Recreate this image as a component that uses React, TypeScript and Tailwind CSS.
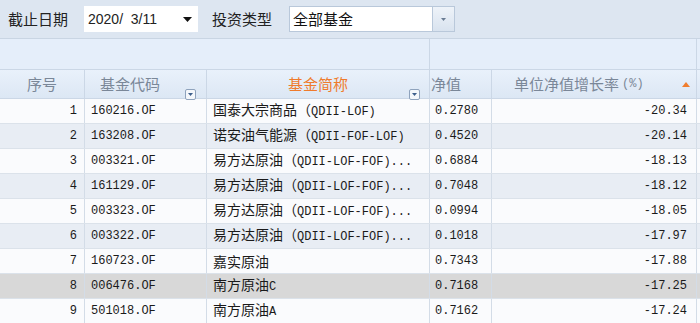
import React from 'react';

interface FundRow {
  no: number;
  code: string;
  name: string;
  nav: string;
  growth: string;
}

const rows: FundRow[] = [
  { no: 1, code: '160216.OF', name: '国泰大宗商品（QDII-LOF)', nav: '0.2780', growth: '-20.34' },
  { no: 2, code: '163208.OF', name: '诺安油气能源（QDII-FOF-LOF)', nav: '0.4520', growth: '-20.14' },
  { no: 3, code: '003321.OF', name: '易方达原油（QDII-LOF-FOF)...', nav: '0.6884', growth: '-18.13' },
  { no: 4, code: '161129.OF', name: '易方达原油（QDII-LOF-FOF)...', nav: '0.7048', growth: '-18.12' },
  { no: 5, code: '003323.OF', name: '易方达原油（QDII-LOF-FOF)...', nav: '0.0994', growth: '-18.05' },
  { no: 6, code: '003322.OF', name: '易方达原油（QDII-LOF-FOF)...', nav: '0.1018', growth: '-17.97' },
  { no: 7, code: '160723.OF', name: '嘉实原油', nav: '0.7343', growth: '-17.88' },
  { no: 8, code: '006476.OF', name: '南方原油C', nav: '0.7168', growth: '-17.25' },
  { no: 9, code: '501018.OF', name: '南方原油A', nav: '0.7162', growth: '-17.24' },
];

const cjk = { fontFamily: '"Noto Sans CJK SC", sans-serif' };
const mono = { fontFamily: '"Liberation Mono", "Noto Sans CJK SC", monospace' };

// split a label into CJK / ascii runs so each gets its own font
const MixedText = ({ text }: { text: string }) => {
  const parts = text.match(/[\u4e00-\u9fff\uff08]+|[^\u4e00-\u9fff\uff08]+/g) ?? [];
  return (
    <span className="relative -top-[1px] whitespace-nowrap leading-[18px]">
      {parts.map((p, i) =>
        /[\u4e00-\u9fff\uff08]/.test(p) ? (
          <span key={i} className="text-[14px]" style={cjk}>{p}</span>
        ) : (
          <span key={i} className="text-[12px]" style={mono}>{p}</span>
        )
      )}
    </span>
  );
};

const FilterIcon = () => (
  <span className="inline-flex h-[11px] w-[11px] items-center justify-center rounded-[2px] border border-[#8fa3bd] bg-[#f4f7fb]">
    <svg width="5" height="3" viewBox="0 0 5 3">
      <path d="M0 0h5L2.5 3z" fill="#3d5f8c" />
    </svg>
  </span>
);

const cols = 'grid grid-cols-[85px_122px_223px_62px_205px_1fr]';

export default function App() {
  return (
    <div className="h-[323px] w-[700px] overflow-hidden bg-white" style={cjk}>
      {/* Toolbar */}
      <div className="flex h-[38px] items-center bg-[#dde6f1] pl-[8px]">
        <span className="w-[76px] text-[15px] text-[#222]">截止日期</span>
        <div className="flex h-[26px] w-[114px] items-center justify-between bg-white pl-[4px] pr-[6px]">
          <span className="text-[14px] text-[#222]" style={{ fontFamily: '"Liberation Sans", sans-serif' }}>2020/&nbsp;&nbsp;3/11</span>
          <svg width="9" height="5" viewBox="0 0 9 5">
            <path d="M0 0h9L4.5 5z" fill="#111" />
          </svg>
        </div>
        <span className="ml-[14px] w-[77px] text-[15px] text-[#222]">投资类型</span>
        <div className="flex h-[26px] items-stretch">
          <div className="flex w-[144px] items-center border border-[#b9c8da] bg-white pl-[3px] text-[15px] text-[#111]">全部基金</div>
          <div className="flex w-[22px] items-center justify-center border border-l-0 border-[#b9c8da] bg-gradient-to-b from-[#eef3f9] to-[#d9e3ef]">
            <svg width="5" height="3" viewBox="0 0 5 3">
              <path d="M0 0h5L2.5 3z" fill="#6a7c93" />
            </svg>
          </div>
        </div>
      </div>

      {/* Group header */}
      <div className="flex h-[31px] border-t border-[#c9d5e3] bg-[#e5eefa]">
        <div className="w-[430px] border-r border-[#cbd7e6]" />
        <div className="w-[267px] border-r border-[#cbd7e6]" />
        <div className="flex-1" />
      </div>

      {/* Column header */}
      <div className={`${cols} h-[30px] border-y border-[#cbd7e6] bg-gradient-to-b from-[#e9f1fb] to-[#dce7f4] text-[15px] text-[#7a8798]`}>
        <div className="flex items-center justify-center border-r border-[#cbd7e6]">序号</div>
        <div className="relative flex items-center border-r border-[#cbd7e6] pl-[15px]">
          基金代码
          <span className="absolute left-[100px] top-[9px]"><FilterIcon /></span>
        </div>
        <div className="relative flex items-center justify-center border-r border-[#cbd7e6] text-[#ef7b2c]">
          基金简称
          <span className="absolute left-[202px] top-[9px]"><FilterIcon /></span>
        </div>
        <div className="flex items-center overflow-hidden border-r border-[#cbd7e6] pl-[1px]">净值</div>
        <div className="relative flex items-center border-r border-[#cbd7e6] pl-[22px]">
          单位净值增长率<span className="ml-[3px] text-[12px]" style={mono}>(%)</span>
          <svg className="absolute left-[190px] top-[12px]" width="8" height="5" viewBox="0 0 8 5">
            <path d="M0 5h8L4 0z" fill="#f07d2e" />
          </svg>
        </div>
        <div />
      </div>

      {/* Rows */}
      {rows.map((r) => {
        const bg = r.no === 8 ? 'bg-[#d8d8d8]' : r.no % 2 === 0 ? 'bg-[#e8edf4]' : 'bg-[#fafbfd]';
        return (
          <div key={r.no} className={`${cols} h-[25px] border-b border-[#dbe2ea] text-[#1a1a1a] ${bg}`}>
            <div className="flex items-center justify-end border-r border-[#d3dce7] pr-[7px] text-[12px]" style={mono}>{r.no}</div>
            <div className="flex items-center border-r border-[#d3dce7] pl-[6px] text-[12px]" style={mono}>{r.code}</div>
            <div className="flex items-center overflow-hidden border-r border-[#d3dce7] pl-[6px]">
              <MixedText text={r.name} />
            </div>
            <div className="flex items-center border-r border-[#d3dce7] pl-[5px] text-[12px]" style={mono}>{r.nav}</div>
            <div className="flex items-center justify-end border-r border-[#d3dce7] pr-[9px] text-[12px]" style={mono}>{r.growth}</div>
            <div />
          </div>
        );
      })}
    </div>
  );
}
